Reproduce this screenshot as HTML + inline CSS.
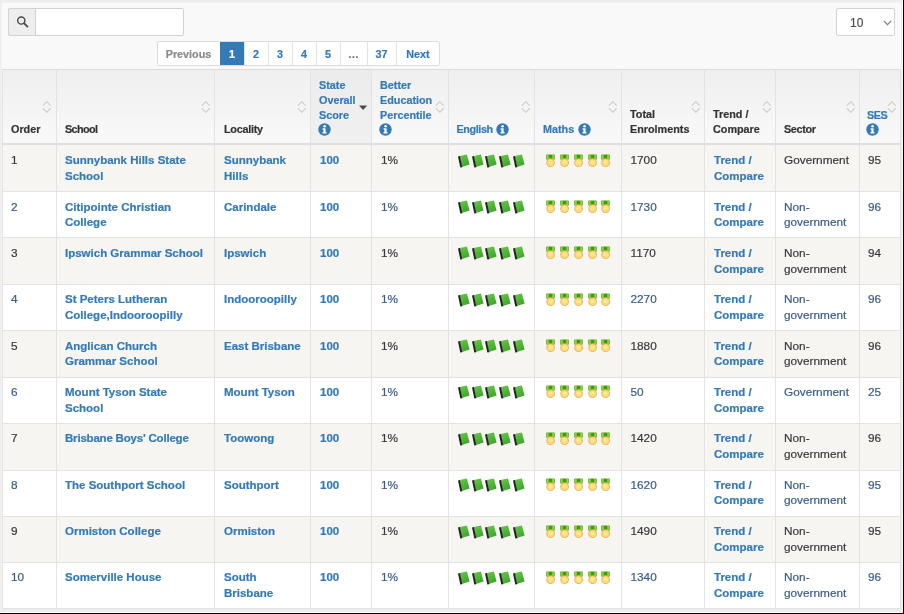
<!DOCTYPE html>
<html><head><meta charset="utf-8"><style>
*{margin:0;padding:0;box-sizing:border-box}
html,body{width:904px;height:614px;overflow:hidden}
body{background:#000;font-family:"Liberation Sans", sans-serif;position:relative}
#page{position:absolute;left:0;top:0;width:903px;height:613px;background:#ededed;overflow:hidden;will-change:transform}
#inner{position:absolute;left:1px;top:2px;width:900px;height:607px;background:#f9f9f9;border-top:1px solid #f3f3f3;border-left:1px solid #f3f3f3}
#bline{position:absolute;left:0;top:612px;width:903px;height:1px;background:#fbfbfb}
#rline{position:absolute;left:902px;top:0;width:1px;height:613px;background:#f6f6f6}
.abs{position:absolute}
.t{position:absolute;white-space:nowrap;-webkit-text-stroke:0.2px currentColor}
.si,.ii,.bk,.md{position:absolute;display:block}
.hline{position:absolute;height:1px;background:#e3e3e3}
.vline{position:absolute;width:1px;background:#e3e3e3}
</style></head>
<body><svg width="0" height="0" style="position:absolute"><defs><linearGradient id="gb" x1="0" y1="0" x2="0.6" y2="1"><stop offset="0" stop-color="#6acb48"/><stop offset="1" stop-color="#3fa42e"/></linearGradient></defs></svg><div id="page"><div id="inner"></div><div id="bline"></div><div id="rline"></div>
<div class="abs" style="left:8px;top:8px;width:176px;height:28px;border:1px solid #d2d2d2;border-radius:2px;background:#fff"></div>
<div class="abs" style="left:8px;top:8px;width:28px;height:28px;border:1px solid #d2d2d2;border-radius:2px 0 0 2px;background:#eee"></div>
<svg class="abs" style="left:16px;top:15px" width="14" height="14" viewBox="0 0 14 14"><circle cx="5.3" cy="5.5" r="3.6" fill="none" stroke="#4a4a4a" stroke-width="1.45"/><path d="M8.0 8.2 L11.4 11.6" stroke="#4a4a4a" stroke-width="1.9" stroke-linecap="round"/></svg>
<div class="abs" style="left:836px;top:8px;width:59px;height:28px;border:1px solid #d2d2d2;border-radius:2px;background:#fff"></div>
<div class="t" style="left:850px;top:15px;font-size:12px;line-height:16px;color:#505050">10</div>
<svg class="abs" style="left:883px;top:19.5px" width="9" height="6" viewBox="0 0 9 6"><path d="M0.8 0.8 L4.5 4.6 L8.2 0.8" fill="none" stroke="#777" stroke-width="1.1"/></svg>
<div class="abs" style="left:157px;top:41px;width:283px;height:25px;background:#fff"></div>
<div class="abs" style="left:157px;top:41px;width:64px;height:25px;background:#fff;"></div>
<div class="t" style="left:157px;width:63px;top:47px;text-align:center;font-size:10.8px;line-height:15px;font-weight:bold;color:#8a8a8a">Previous</div>
<div class="abs" style="left:220px;top:41px;width:24px;height:25px;background:#337ab7;"></div>
<div class="t" style="left:220px;width:24px;top:47px;text-align:center;font-size:10.8px;line-height:15px;font-weight:bold;color:#fff">1</div>
<div class="abs" style="left:244px;top:41px;width:24px;height:25px;background:#fff;border-left:1px solid #e2e2e2;"></div>
<div class="t" style="left:244px;width:24px;top:47px;text-align:center;font-size:10.8px;line-height:15px;font-weight:bold;color:#337ab7">2</div>
<div class="abs" style="left:268px;top:41px;width:24px;height:25px;background:#fff;border-left:1px solid #e2e2e2;"></div>
<div class="t" style="left:268px;width:24px;top:47px;text-align:center;font-size:10.8px;line-height:15px;font-weight:bold;color:#337ab7">3</div>
<div class="abs" style="left:292px;top:41px;width:24px;height:25px;background:#fff;border-left:1px solid #e2e2e2;"></div>
<div class="t" style="left:292px;width:24px;top:47px;text-align:center;font-size:10.8px;line-height:15px;font-weight:bold;color:#337ab7">4</div>
<div class="abs" style="left:316px;top:41px;width:24px;height:25px;background:#fff;border-left:1px solid #e2e2e2;"></div>
<div class="t" style="left:316px;width:24px;top:47px;text-align:center;font-size:10.8px;line-height:15px;font-weight:bold;color:#337ab7">5</div>
<div class="abs" style="left:340px;top:41px;width:27px;height:25px;background:#fff;border-left:1px solid #e2e2e2;"></div>
<div class="t" style="left:340px;width:27px;top:47px;text-align:center;font-size:10.8px;line-height:15px;font-weight:bold;color:#777">…</div>
<div class="abs" style="left:367px;top:41px;width:29px;height:25px;background:#fff;border-left:1px solid #e2e2e2;"></div>
<div class="t" style="left:367px;width:29px;top:47px;text-align:center;font-size:10.8px;line-height:15px;font-weight:bold;color:#337ab7">37</div>
<div class="abs" style="left:396px;top:41px;width:44px;height:25px;background:#fff;border-left:1px solid #e2e2e2;"></div>
<div class="t" style="left:396px;width:44px;top:47px;text-align:center;font-size:10.8px;line-height:15px;font-weight:bold;color:#337ab7">Next</div>
<div class="abs" style="left:157px;top:41px;width:283px;height:25px;border:1px solid #dcdcdc;border-radius:2px"></div>
<div class="abs" style="left:2px;top:70px;width:899px;height:74px;background:linear-gradient(#efefef,#f9f9f9)"></div>
<div class="abs" style="left:311px;top:70px;width:60px;height:74px;background:linear-gradient(#ececec,#f0f0f0)"></div>
<div class="abs" style="left:3px;top:145px;width:897px;height:46px;background:#f6f5f1"></div>
<div class="abs" style="left:3px;top:192px;width:897px;height:45px;background:#fff"></div>
<div class="abs" style="left:3px;top:238px;width:897px;height:46px;background:#f6f5f1"></div>
<div class="abs" style="left:3px;top:285px;width:897px;height:45px;background:#fff"></div>
<div class="abs" style="left:3px;top:331px;width:897px;height:46px;background:#f6f5f1"></div>
<div class="abs" style="left:3px;top:378px;width:897px;height:45px;background:#fff"></div>
<div class="abs" style="left:3px;top:424px;width:897px;height:46px;background:#f6f5f1"></div>
<div class="abs" style="left:3px;top:471px;width:897px;height:45px;background:#fff"></div>
<div class="abs" style="left:3px;top:517px;width:897px;height:45px;background:#f6f5f1"></div>
<div class="abs" style="left:3px;top:563px;width:897px;height:45px;background:#fff"></div>
<div class="hline" style="left:2px;top:69px;width:899px;background:#dcdcdc"></div>
<div class="abs" style="left:2px;top:143px;width:899px;height:2px;background:#dedede"></div>
<div class="hline" style="left:2px;top:191px;width:899px"></div>
<div class="hline" style="left:2px;top:237px;width:899px"></div>
<div class="hline" style="left:2px;top:284px;width:899px"></div>
<div class="hline" style="left:2px;top:330px;width:899px"></div>
<div class="hline" style="left:2px;top:377px;width:899px"></div>
<div class="hline" style="left:2px;top:423px;width:899px"></div>
<div class="hline" style="left:2px;top:470px;width:899px"></div>
<div class="hline" style="left:2px;top:516px;width:899px"></div>
<div class="hline" style="left:2px;top:562px;width:899px"></div>
<div class="hline" style="left:2px;top:608px;width:899px"></div>
<div class="vline" style="left:2px;top:69px;height:540px"></div>
<div class="vline" style="left:56px;top:69px;height:540px"></div>
<div class="vline" style="left:214px;top:69px;height:540px"></div>
<div class="vline" style="left:310px;top:69px;height:540px"></div>
<div class="vline" style="left:371px;top:69px;height:540px"></div>
<div class="vline" style="left:448px;top:69px;height:540px"></div>
<div class="vline" style="left:534px;top:69px;height:540px"></div>
<div class="vline" style="left:621px;top:69px;height:540px"></div>
<div class="vline" style="left:704px;top:69px;height:540px"></div>
<div class="vline" style="left:775px;top:69px;height:540px"></div>
<div class="vline" style="left:859px;top:69px;height:540px"></div>
<div class="vline" style="left:900px;top:69px;height:540px"></div>
<div class="t" style="left:11px;top:121.76px;font-size:10.8px;line-height:14.8px;font-weight:bold;color:#333;letter-spacing:0px">Order</div>
<div class="t" style="left:65px;top:121.76px;font-size:10.8px;line-height:14.8px;font-weight:bold;color:#333;letter-spacing:-0.6px">School</div>
<div class="t" style="left:224px;top:121.76px;font-size:10.8px;line-height:14.8px;font-weight:bold;color:#333;letter-spacing:-0.25px">Locality</div>
<div class="t" style="left:319px;top:78.26px;font-size:10.8px;line-height:14.8px;font-weight:bold;color:#337ab7;letter-spacing:0px">State<br>Overall<br>Score</div>
<svg class="ii" style="left:318px;top:123px" width="13" height="13" viewBox="0 0 13 13"><circle cx="6.5" cy="6.5" r="6.2" fill="#337ab7"/><circle cx="6.6" cy="3.2" r="1.3" fill="#fff"/><path d="M4.6 5.3 H7.6 V9.2 H8.6 V10.6 H4.4 V9.2 H5.4 V6.6 H4.6 Z" fill="#fff"/></svg>
<div class="t" style="left:380px;top:78.26px;font-size:10.8px;line-height:14.8px;font-weight:bold;color:#337ab7;letter-spacing:0px">Better<br>Education<br>Percentile</div>
<svg class="ii" style="left:379px;top:123px" width="13" height="13" viewBox="0 0 13 13"><circle cx="6.5" cy="6.5" r="6.2" fill="#337ab7"/><circle cx="6.6" cy="3.2" r="1.3" fill="#fff"/><path d="M4.6 5.3 H7.6 V9.2 H8.6 V10.6 H4.4 V9.2 H5.4 V6.6 H4.6 Z" fill="#fff"/></svg>
<div class="t" style="left:456.5px;top:121.76px;font-size:10.8px;line-height:14.8px;font-weight:bold;color:#337ab7;letter-spacing:-0.38px">English</div>
<svg class="ii" style="left:495.5px;top:123px" width="13" height="13" viewBox="0 0 13 13"><circle cx="6.5" cy="6.5" r="6.2" fill="#337ab7"/><circle cx="6.6" cy="3.2" r="1.3" fill="#fff"/><path d="M4.6 5.3 H7.6 V9.2 H8.6 V10.6 H4.4 V9.2 H5.4 V6.6 H4.6 Z" fill="#fff"/></svg>
<div class="t" style="left:543px;top:121.76px;font-size:10.8px;line-height:14.8px;font-weight:bold;color:#337ab7;letter-spacing:0px">Maths</div>
<svg class="ii" style="left:577.7px;top:123px" width="13" height="13" viewBox="0 0 13 13"><circle cx="6.5" cy="6.5" r="6.2" fill="#337ab7"/><circle cx="6.6" cy="3.2" r="1.3" fill="#fff"/><path d="M4.6 5.3 H7.6 V9.2 H8.6 V10.6 H4.4 V9.2 H5.4 V6.6 H4.6 Z" fill="#fff"/></svg>
<div class="t" style="left:630px;top:106.96px;font-size:10.8px;line-height:14.8px;font-weight:bold;color:#333;letter-spacing:0px">Total<br>Enrolments</div>
<div class="t" style="left:713px;top:106.96px;font-size:10.8px;line-height:14.8px;font-weight:bold;color:#333;letter-spacing:0px">Trend /<br>Compare</div>
<div class="t" style="left:784px;top:121.76px;font-size:10.8px;line-height:14.8px;font-weight:bold;color:#333;letter-spacing:-0.35px">Sector</div>
<div class="t" style="left:867px;top:107.86px;font-size:10.8px;line-height:14.8px;font-weight:bold;color:#337ab7;letter-spacing:-0.5px">SES</div>
<svg class="ii" style="left:866px;top:123px" width="13" height="13" viewBox="0 0 13 13"><circle cx="6.5" cy="6.5" r="6.2" fill="#337ab7"/><circle cx="6.6" cy="3.2" r="1.3" fill="#fff"/><path d="M4.6 5.3 H7.6 V9.2 H8.6 V10.6 H4.4 V9.2 H5.4 V6.6 H4.6 Z" fill="#fff"/></svg>
<svg class="si" style="left:42.300000000000004px;top:100.3px" width="10" height="14" viewBox="0 0 10 14"><path d="M0.9 5.7 L4.8 1.6 L8.7 5.7 M0.9 8.2 L4.8 12.3 L8.7 8.2" fill="none" stroke="#d2d2d2" stroke-width="1.25"/></svg>
<svg class="si" style="left:201.1px;top:100.3px" width="10" height="14" viewBox="0 0 10 14"><path d="M0.9 5.7 L4.8 1.6 L8.7 5.7 M0.9 8.2 L4.8 12.3 L8.7 8.2" fill="none" stroke="#d2d2d2" stroke-width="1.25"/></svg>
<svg class="si" style="left:296.90000000000003px;top:100.3px" width="10" height="14" viewBox="0 0 10 14"><path d="M0.9 5.7 L4.8 1.6 L8.7 5.7 M0.9 8.2 L4.8 12.3 L8.7 8.2" fill="none" stroke="#d2d2d2" stroke-width="1.25"/></svg>
<svg class="si" style="left:434.6px;top:100.3px" width="10" height="14" viewBox="0 0 10 14"><path d="M0.9 5.7 L4.8 1.6 L8.7 5.7 M0.9 8.2 L4.8 12.3 L8.7 8.2" fill="none" stroke="#d2d2d2" stroke-width="1.25"/></svg>
<svg class="si" style="left:521.1px;top:100.3px" width="10" height="14" viewBox="0 0 10 14"><path d="M0.9 5.7 L4.8 1.6 L8.7 5.7 M0.9 8.2 L4.8 12.3 L8.7 8.2" fill="none" stroke="#d2d2d2" stroke-width="1.25"/></svg>
<svg class="si" style="left:607.9px;top:100.3px" width="10" height="14" viewBox="0 0 10 14"><path d="M0.9 5.7 L4.8 1.6 L8.7 5.7 M0.9 8.2 L4.8 12.3 L8.7 8.2" fill="none" stroke="#d2d2d2" stroke-width="1.25"/></svg>
<svg class="si" style="left:691.1px;top:100.3px" width="10" height="14" viewBox="0 0 10 14"><path d="M0.9 5.7 L4.8 1.6 L8.7 5.7 M0.9 8.2 L4.8 12.3 L8.7 8.2" fill="none" stroke="#d2d2d2" stroke-width="1.25"/></svg>
<svg class="si" style="left:762.2px;top:100.3px" width="10" height="14" viewBox="0 0 10 14"><path d="M0.9 5.7 L4.8 1.6 L8.7 5.7 M0.9 8.2 L4.8 12.3 L8.7 8.2" fill="none" stroke="#d2d2d2" stroke-width="1.25"/></svg>
<svg class="si" style="left:845.6px;top:100.3px" width="10" height="14" viewBox="0 0 10 14"><path d="M0.9 5.7 L4.8 1.6 L8.7 5.7 M0.9 8.2 L4.8 12.3 L8.7 8.2" fill="none" stroke="#d2d2d2" stroke-width="1.25"/></svg>
<svg class="si" style="left:886.9px;top:100.3px" width="10" height="14" viewBox="0 0 10 14"><path d="M0.9 5.7 L4.8 1.6 L8.7 5.7 M0.9 8.2 L4.8 12.3 L8.7 8.2" fill="none" stroke="#d2d2d2" stroke-width="1.25"/></svg>
<svg class="abs" style="left:358px;top:105px" width="10" height="6" viewBox="0 0 10 6"><path d="M1 0.6 H9.2 L5.1 5 Z" fill="#4a4a4a"/></svg>
<div class="t" style="left:11px;top:152.21px;font-size:11.8px;line-height:16px;color:#3a3a3a">1</div>
<div class="t" style="left:65px;top:152.32px;font-size:11.5px;line-height:16px;font-weight:bold;color:#337ab7">Sunnybank Hills State</div><div class="t" style="left:65px;top:167.92px;font-size:11.5px;line-height:16px;font-weight:bold;color:#337ab7">School</div>
<div class="t" style="left:224px;top:152.32px;font-size:11.5px;line-height:16px;font-weight:bold;color:#337ab7">Sunnybank</div><div class="t" style="left:224px;top:167.92px;font-size:11.5px;line-height:16px;font-weight:bold;color:#337ab7">Hills</div>
<div class="t" style="left:320px;top:152.32px;font-size:11.5px;line-height:16px;font-weight:bold;color:#337ab7">100</div>
<div class="t" style="left:381px;top:152.21px;font-size:11.8px;line-height:16px;color:#3a3a3a">1%</div>
<svg class="bk" style="left:458.0px;top:153.70000000000002px" width="13" height="15" viewBox="0 0 13 15"><path d="M1.6 1.9 L8.9 0.5 L11.6 10.6 L3.9 13.0 Z" fill="url(#gb)"/><path d="M0.0 2.5 L1.9 2.1 L4.3 13.3 L2.3 13.6 Z" fill="#222"/></svg>
<svg class="bk" style="left:471.7px;top:153.70000000000002px" width="13" height="15" viewBox="0 0 13 15"><path d="M1.6 1.9 L8.9 0.5 L11.6 10.6 L3.9 13.0 Z" fill="url(#gb)"/><path d="M0.0 2.5 L1.9 2.1 L4.3 13.3 L2.3 13.6 Z" fill="#222"/></svg>
<svg class="bk" style="left:485.4px;top:153.70000000000002px" width="13" height="15" viewBox="0 0 13 15"><path d="M1.6 1.9 L8.9 0.5 L11.6 10.6 L3.9 13.0 Z" fill="url(#gb)"/><path d="M0.0 2.5 L1.9 2.1 L4.3 13.3 L2.3 13.6 Z" fill="#222"/></svg>
<svg class="bk" style="left:499.1px;top:153.70000000000002px" width="13" height="15" viewBox="0 0 13 15"><path d="M1.6 1.9 L8.9 0.5 L11.6 10.6 L3.9 13.0 Z" fill="url(#gb)"/><path d="M0.0 2.5 L1.9 2.1 L4.3 13.3 L2.3 13.6 Z" fill="#222"/></svg>
<svg class="bk" style="left:512.8px;top:153.70000000000002px" width="13" height="15" viewBox="0 0 13 15"><path d="M1.6 1.9 L8.9 0.5 L11.6 10.6 L3.9 13.0 Z" fill="url(#gb)"/><path d="M0.0 2.5 L1.9 2.1 L4.3 13.3 L2.3 13.6 Z" fill="#222"/></svg>
<svg class="md" style="left:546.2px;top:153.70000000000002px" width="10" height="15" viewBox="0 0 10 15"><rect x="0.2" y="0.5" width="8.6" height="5.2" rx="0.7" fill="#5aaf1e"/><rect x="1.0" y="0.9" width="1.6" height="4.4" fill="#8fd43c"/><rect x="6.4" y="0.9" width="1.6" height="4.4" fill="#8fd43c"/><rect x="3.2" y="0.9" width="2.6" height="4.4" fill="#3f9612"/><circle cx="4.6" cy="8.7" r="4.35" fill="#ebb05e"/><circle cx="4.6" cy="8.7" r="3.45" fill="#f9dc72"/><circle cx="4.6" cy="8.3" r="2.1" fill="#fce796"/></svg>
<svg class="md" style="left:559.98px;top:153.70000000000002px" width="10" height="15" viewBox="0 0 10 15"><rect x="0.2" y="0.5" width="8.6" height="5.2" rx="0.7" fill="#5aaf1e"/><rect x="1.0" y="0.9" width="1.6" height="4.4" fill="#8fd43c"/><rect x="6.4" y="0.9" width="1.6" height="4.4" fill="#8fd43c"/><rect x="3.2" y="0.9" width="2.6" height="4.4" fill="#3f9612"/><circle cx="4.6" cy="8.7" r="4.35" fill="#ebb05e"/><circle cx="4.6" cy="8.7" r="3.45" fill="#f9dc72"/><circle cx="4.6" cy="8.3" r="2.1" fill="#fce796"/></svg>
<svg class="md" style="left:573.76px;top:153.70000000000002px" width="10" height="15" viewBox="0 0 10 15"><rect x="0.2" y="0.5" width="8.6" height="5.2" rx="0.7" fill="#5aaf1e"/><rect x="1.0" y="0.9" width="1.6" height="4.4" fill="#8fd43c"/><rect x="6.4" y="0.9" width="1.6" height="4.4" fill="#8fd43c"/><rect x="3.2" y="0.9" width="2.6" height="4.4" fill="#3f9612"/><circle cx="4.6" cy="8.7" r="4.35" fill="#ebb05e"/><circle cx="4.6" cy="8.7" r="3.45" fill="#f9dc72"/><circle cx="4.6" cy="8.3" r="2.1" fill="#fce796"/></svg>
<svg class="md" style="left:587.5400000000001px;top:153.70000000000002px" width="10" height="15" viewBox="0 0 10 15"><rect x="0.2" y="0.5" width="8.6" height="5.2" rx="0.7" fill="#5aaf1e"/><rect x="1.0" y="0.9" width="1.6" height="4.4" fill="#8fd43c"/><rect x="6.4" y="0.9" width="1.6" height="4.4" fill="#8fd43c"/><rect x="3.2" y="0.9" width="2.6" height="4.4" fill="#3f9612"/><circle cx="4.6" cy="8.7" r="4.35" fill="#ebb05e"/><circle cx="4.6" cy="8.7" r="3.45" fill="#f9dc72"/><circle cx="4.6" cy="8.3" r="2.1" fill="#fce796"/></svg>
<svg class="md" style="left:601.32px;top:153.70000000000002px" width="10" height="15" viewBox="0 0 10 15"><rect x="0.2" y="0.5" width="8.6" height="5.2" rx="0.7" fill="#5aaf1e"/><rect x="1.0" y="0.9" width="1.6" height="4.4" fill="#8fd43c"/><rect x="6.4" y="0.9" width="1.6" height="4.4" fill="#8fd43c"/><rect x="3.2" y="0.9" width="2.6" height="4.4" fill="#3f9612"/><circle cx="4.6" cy="8.7" r="4.35" fill="#ebb05e"/><circle cx="4.6" cy="8.7" r="3.45" fill="#f9dc72"/><circle cx="4.6" cy="8.3" r="2.1" fill="#fce796"/></svg>
<div class="t" style="left:630.5px;top:152.21px;font-size:11.8px;line-height:16px;color:#3a3a3a">1700</div>
<div class="t" style="left:714px;top:152.32px;font-size:11.5px;line-height:16px;font-weight:bold;color:#337ab7">Trend /</div><div class="t" style="left:714px;top:167.92px;font-size:11.5px;line-height:16px;font-weight:bold;color:#337ab7">Compare</div>
<div class="t" style="left:784px;top:152.21px;font-size:11.8px;line-height:16px;color:#3a3a3a">Government</div>
<div class="t" style="left:868px;top:152.21px;font-size:11.8px;line-height:16px;color:#3a3a3a">95</div>
<div class="t" style="left:11px;top:198.56px;font-size:11.8px;line-height:16px;color:#3a5b8a">2</div>
<div class="t" style="left:65px;top:198.67px;font-size:11.5px;line-height:16px;font-weight:bold;color:#337ab7">Citipointe Christian</div><div class="t" style="left:65px;top:214.27px;font-size:11.5px;line-height:16px;font-weight:bold;color:#337ab7">College</div>
<div class="t" style="left:224px;top:198.67px;font-size:11.5px;line-height:16px;font-weight:bold;color:#337ab7">Carindale</div>
<div class="t" style="left:320px;top:198.67px;font-size:11.5px;line-height:16px;font-weight:bold;color:#337ab7">100</div>
<div class="t" style="left:381px;top:198.56px;font-size:11.8px;line-height:16px;color:#3a5b8a">1%</div>
<svg class="bk" style="left:458.0px;top:200.05px" width="13" height="15" viewBox="0 0 13 15"><path d="M1.6 1.9 L8.9 0.5 L11.6 10.6 L3.9 13.0 Z" fill="url(#gb)"/><path d="M0.0 2.5 L1.9 2.1 L4.3 13.3 L2.3 13.6 Z" fill="#222"/></svg>
<svg class="bk" style="left:471.7px;top:200.05px" width="13" height="15" viewBox="0 0 13 15"><path d="M1.6 1.9 L8.9 0.5 L11.6 10.6 L3.9 13.0 Z" fill="url(#gb)"/><path d="M0.0 2.5 L1.9 2.1 L4.3 13.3 L2.3 13.6 Z" fill="#222"/></svg>
<svg class="bk" style="left:485.4px;top:200.05px" width="13" height="15" viewBox="0 0 13 15"><path d="M1.6 1.9 L8.9 0.5 L11.6 10.6 L3.9 13.0 Z" fill="url(#gb)"/><path d="M0.0 2.5 L1.9 2.1 L4.3 13.3 L2.3 13.6 Z" fill="#222"/></svg>
<svg class="bk" style="left:499.1px;top:200.05px" width="13" height="15" viewBox="0 0 13 15"><path d="M1.6 1.9 L8.9 0.5 L11.6 10.6 L3.9 13.0 Z" fill="url(#gb)"/><path d="M0.0 2.5 L1.9 2.1 L4.3 13.3 L2.3 13.6 Z" fill="#222"/></svg>
<svg class="bk" style="left:512.8px;top:200.05px" width="13" height="15" viewBox="0 0 13 15"><path d="M1.6 1.9 L8.9 0.5 L11.6 10.6 L3.9 13.0 Z" fill="url(#gb)"/><path d="M0.0 2.5 L1.9 2.1 L4.3 13.3 L2.3 13.6 Z" fill="#222"/></svg>
<svg class="md" style="left:546.2px;top:200.05px" width="10" height="15" viewBox="0 0 10 15"><rect x="0.2" y="0.5" width="8.6" height="5.2" rx="0.7" fill="#5aaf1e"/><rect x="1.0" y="0.9" width="1.6" height="4.4" fill="#8fd43c"/><rect x="6.4" y="0.9" width="1.6" height="4.4" fill="#8fd43c"/><rect x="3.2" y="0.9" width="2.6" height="4.4" fill="#3f9612"/><circle cx="4.6" cy="8.7" r="4.35" fill="#ebb05e"/><circle cx="4.6" cy="8.7" r="3.45" fill="#f9dc72"/><circle cx="4.6" cy="8.3" r="2.1" fill="#fce796"/></svg>
<svg class="md" style="left:559.98px;top:200.05px" width="10" height="15" viewBox="0 0 10 15"><rect x="0.2" y="0.5" width="8.6" height="5.2" rx="0.7" fill="#5aaf1e"/><rect x="1.0" y="0.9" width="1.6" height="4.4" fill="#8fd43c"/><rect x="6.4" y="0.9" width="1.6" height="4.4" fill="#8fd43c"/><rect x="3.2" y="0.9" width="2.6" height="4.4" fill="#3f9612"/><circle cx="4.6" cy="8.7" r="4.35" fill="#ebb05e"/><circle cx="4.6" cy="8.7" r="3.45" fill="#f9dc72"/><circle cx="4.6" cy="8.3" r="2.1" fill="#fce796"/></svg>
<svg class="md" style="left:573.76px;top:200.05px" width="10" height="15" viewBox="0 0 10 15"><rect x="0.2" y="0.5" width="8.6" height="5.2" rx="0.7" fill="#5aaf1e"/><rect x="1.0" y="0.9" width="1.6" height="4.4" fill="#8fd43c"/><rect x="6.4" y="0.9" width="1.6" height="4.4" fill="#8fd43c"/><rect x="3.2" y="0.9" width="2.6" height="4.4" fill="#3f9612"/><circle cx="4.6" cy="8.7" r="4.35" fill="#ebb05e"/><circle cx="4.6" cy="8.7" r="3.45" fill="#f9dc72"/><circle cx="4.6" cy="8.3" r="2.1" fill="#fce796"/></svg>
<svg class="md" style="left:587.5400000000001px;top:200.05px" width="10" height="15" viewBox="0 0 10 15"><rect x="0.2" y="0.5" width="8.6" height="5.2" rx="0.7" fill="#5aaf1e"/><rect x="1.0" y="0.9" width="1.6" height="4.4" fill="#8fd43c"/><rect x="6.4" y="0.9" width="1.6" height="4.4" fill="#8fd43c"/><rect x="3.2" y="0.9" width="2.6" height="4.4" fill="#3f9612"/><circle cx="4.6" cy="8.7" r="4.35" fill="#ebb05e"/><circle cx="4.6" cy="8.7" r="3.45" fill="#f9dc72"/><circle cx="4.6" cy="8.3" r="2.1" fill="#fce796"/></svg>
<svg class="md" style="left:601.32px;top:200.05px" width="10" height="15" viewBox="0 0 10 15"><rect x="0.2" y="0.5" width="8.6" height="5.2" rx="0.7" fill="#5aaf1e"/><rect x="1.0" y="0.9" width="1.6" height="4.4" fill="#8fd43c"/><rect x="6.4" y="0.9" width="1.6" height="4.4" fill="#8fd43c"/><rect x="3.2" y="0.9" width="2.6" height="4.4" fill="#3f9612"/><circle cx="4.6" cy="8.7" r="4.35" fill="#ebb05e"/><circle cx="4.6" cy="8.7" r="3.45" fill="#f9dc72"/><circle cx="4.6" cy="8.3" r="2.1" fill="#fce796"/></svg>
<div class="t" style="left:630.5px;top:198.56px;font-size:11.8px;line-height:16px;color:#3a5b8a">1730</div>
<div class="t" style="left:714px;top:198.67px;font-size:11.5px;line-height:16px;font-weight:bold;color:#337ab7">Trend /</div><div class="t" style="left:714px;top:214.27px;font-size:11.5px;line-height:16px;font-weight:bold;color:#337ab7">Compare</div>
<div class="t" style="left:784px;top:198.56px;font-size:11.8px;line-height:16px;color:#3a5b8a">Non-</div><div class="t" style="left:784px;top:214.16px;font-size:11.8px;line-height:16px;color:#3a5b8a">government</div>
<div class="t" style="left:868px;top:198.56px;font-size:11.8px;line-height:16px;color:#3a5b8a">96</div>
<div class="t" style="left:11px;top:244.91px;font-size:11.8px;line-height:16px;color:#3a3a3a">3</div>
<div class="t" style="left:65px;top:245.02px;font-size:11.5px;line-height:16px;font-weight:bold;color:#337ab7">Ipswich Grammar School</div>
<div class="t" style="left:224px;top:245.02px;font-size:11.5px;line-height:16px;font-weight:bold;color:#337ab7">Ipswich</div>
<div class="t" style="left:320px;top:245.02px;font-size:11.5px;line-height:16px;font-weight:bold;color:#337ab7">100</div>
<div class="t" style="left:381px;top:244.91px;font-size:11.8px;line-height:16px;color:#3a3a3a">1%</div>
<svg class="bk" style="left:458.0px;top:246.4px" width="13" height="15" viewBox="0 0 13 15"><path d="M1.6 1.9 L8.9 0.5 L11.6 10.6 L3.9 13.0 Z" fill="url(#gb)"/><path d="M0.0 2.5 L1.9 2.1 L4.3 13.3 L2.3 13.6 Z" fill="#222"/></svg>
<svg class="bk" style="left:471.7px;top:246.4px" width="13" height="15" viewBox="0 0 13 15"><path d="M1.6 1.9 L8.9 0.5 L11.6 10.6 L3.9 13.0 Z" fill="url(#gb)"/><path d="M0.0 2.5 L1.9 2.1 L4.3 13.3 L2.3 13.6 Z" fill="#222"/></svg>
<svg class="bk" style="left:485.4px;top:246.4px" width="13" height="15" viewBox="0 0 13 15"><path d="M1.6 1.9 L8.9 0.5 L11.6 10.6 L3.9 13.0 Z" fill="url(#gb)"/><path d="M0.0 2.5 L1.9 2.1 L4.3 13.3 L2.3 13.6 Z" fill="#222"/></svg>
<svg class="bk" style="left:499.1px;top:246.4px" width="13" height="15" viewBox="0 0 13 15"><path d="M1.6 1.9 L8.9 0.5 L11.6 10.6 L3.9 13.0 Z" fill="url(#gb)"/><path d="M0.0 2.5 L1.9 2.1 L4.3 13.3 L2.3 13.6 Z" fill="#222"/></svg>
<svg class="bk" style="left:512.8px;top:246.4px" width="13" height="15" viewBox="0 0 13 15"><path d="M1.6 1.9 L8.9 0.5 L11.6 10.6 L3.9 13.0 Z" fill="url(#gb)"/><path d="M0.0 2.5 L1.9 2.1 L4.3 13.3 L2.3 13.6 Z" fill="#222"/></svg>
<svg class="md" style="left:546.2px;top:246.4px" width="10" height="15" viewBox="0 0 10 15"><rect x="0.2" y="0.5" width="8.6" height="5.2" rx="0.7" fill="#5aaf1e"/><rect x="1.0" y="0.9" width="1.6" height="4.4" fill="#8fd43c"/><rect x="6.4" y="0.9" width="1.6" height="4.4" fill="#8fd43c"/><rect x="3.2" y="0.9" width="2.6" height="4.4" fill="#3f9612"/><circle cx="4.6" cy="8.7" r="4.35" fill="#ebb05e"/><circle cx="4.6" cy="8.7" r="3.45" fill="#f9dc72"/><circle cx="4.6" cy="8.3" r="2.1" fill="#fce796"/></svg>
<svg class="md" style="left:559.98px;top:246.4px" width="10" height="15" viewBox="0 0 10 15"><rect x="0.2" y="0.5" width="8.6" height="5.2" rx="0.7" fill="#5aaf1e"/><rect x="1.0" y="0.9" width="1.6" height="4.4" fill="#8fd43c"/><rect x="6.4" y="0.9" width="1.6" height="4.4" fill="#8fd43c"/><rect x="3.2" y="0.9" width="2.6" height="4.4" fill="#3f9612"/><circle cx="4.6" cy="8.7" r="4.35" fill="#ebb05e"/><circle cx="4.6" cy="8.7" r="3.45" fill="#f9dc72"/><circle cx="4.6" cy="8.3" r="2.1" fill="#fce796"/></svg>
<svg class="md" style="left:573.76px;top:246.4px" width="10" height="15" viewBox="0 0 10 15"><rect x="0.2" y="0.5" width="8.6" height="5.2" rx="0.7" fill="#5aaf1e"/><rect x="1.0" y="0.9" width="1.6" height="4.4" fill="#8fd43c"/><rect x="6.4" y="0.9" width="1.6" height="4.4" fill="#8fd43c"/><rect x="3.2" y="0.9" width="2.6" height="4.4" fill="#3f9612"/><circle cx="4.6" cy="8.7" r="4.35" fill="#ebb05e"/><circle cx="4.6" cy="8.7" r="3.45" fill="#f9dc72"/><circle cx="4.6" cy="8.3" r="2.1" fill="#fce796"/></svg>
<svg class="md" style="left:587.5400000000001px;top:246.4px" width="10" height="15" viewBox="0 0 10 15"><rect x="0.2" y="0.5" width="8.6" height="5.2" rx="0.7" fill="#5aaf1e"/><rect x="1.0" y="0.9" width="1.6" height="4.4" fill="#8fd43c"/><rect x="6.4" y="0.9" width="1.6" height="4.4" fill="#8fd43c"/><rect x="3.2" y="0.9" width="2.6" height="4.4" fill="#3f9612"/><circle cx="4.6" cy="8.7" r="4.35" fill="#ebb05e"/><circle cx="4.6" cy="8.7" r="3.45" fill="#f9dc72"/><circle cx="4.6" cy="8.3" r="2.1" fill="#fce796"/></svg>
<svg class="md" style="left:601.32px;top:246.4px" width="10" height="15" viewBox="0 0 10 15"><rect x="0.2" y="0.5" width="8.6" height="5.2" rx="0.7" fill="#5aaf1e"/><rect x="1.0" y="0.9" width="1.6" height="4.4" fill="#8fd43c"/><rect x="6.4" y="0.9" width="1.6" height="4.4" fill="#8fd43c"/><rect x="3.2" y="0.9" width="2.6" height="4.4" fill="#3f9612"/><circle cx="4.6" cy="8.7" r="4.35" fill="#ebb05e"/><circle cx="4.6" cy="8.7" r="3.45" fill="#f9dc72"/><circle cx="4.6" cy="8.3" r="2.1" fill="#fce796"/></svg>
<div class="t" style="left:630.5px;top:244.91px;font-size:11.8px;line-height:16px;color:#3a3a3a">1170</div>
<div class="t" style="left:714px;top:245.02px;font-size:11.5px;line-height:16px;font-weight:bold;color:#337ab7">Trend /</div><div class="t" style="left:714px;top:260.62px;font-size:11.5px;line-height:16px;font-weight:bold;color:#337ab7">Compare</div>
<div class="t" style="left:784px;top:244.91px;font-size:11.8px;line-height:16px;color:#3a3a3a">Non-</div><div class="t" style="left:784px;top:260.51px;font-size:11.8px;line-height:16px;color:#3a3a3a">government</div>
<div class="t" style="left:868px;top:244.91px;font-size:11.8px;line-height:16px;color:#3a3a3a">94</div>
<div class="t" style="left:11px;top:291.26px;font-size:11.8px;line-height:16px;color:#3a5b8a">4</div>
<div class="t" style="left:65px;top:291.37px;font-size:11.5px;line-height:16px;font-weight:bold;color:#337ab7">St Peters Lutheran</div><div class="t" style="left:65px;top:306.97px;font-size:11.5px;line-height:16px;font-weight:bold;color:#337ab7">College,Indooroopilly</div>
<div class="t" style="left:224px;top:291.37px;font-size:11.5px;line-height:16px;font-weight:bold;color:#337ab7">Indooroopilly</div>
<div class="t" style="left:320px;top:291.37px;font-size:11.5px;line-height:16px;font-weight:bold;color:#337ab7">100</div>
<div class="t" style="left:381px;top:291.26px;font-size:11.8px;line-height:16px;color:#3a5b8a">1%</div>
<svg class="bk" style="left:458.0px;top:292.75px" width="13" height="15" viewBox="0 0 13 15"><path d="M1.6 1.9 L8.9 0.5 L11.6 10.6 L3.9 13.0 Z" fill="url(#gb)"/><path d="M0.0 2.5 L1.9 2.1 L4.3 13.3 L2.3 13.6 Z" fill="#222"/></svg>
<svg class="bk" style="left:471.7px;top:292.75px" width="13" height="15" viewBox="0 0 13 15"><path d="M1.6 1.9 L8.9 0.5 L11.6 10.6 L3.9 13.0 Z" fill="url(#gb)"/><path d="M0.0 2.5 L1.9 2.1 L4.3 13.3 L2.3 13.6 Z" fill="#222"/></svg>
<svg class="bk" style="left:485.4px;top:292.75px" width="13" height="15" viewBox="0 0 13 15"><path d="M1.6 1.9 L8.9 0.5 L11.6 10.6 L3.9 13.0 Z" fill="url(#gb)"/><path d="M0.0 2.5 L1.9 2.1 L4.3 13.3 L2.3 13.6 Z" fill="#222"/></svg>
<svg class="bk" style="left:499.1px;top:292.75px" width="13" height="15" viewBox="0 0 13 15"><path d="M1.6 1.9 L8.9 0.5 L11.6 10.6 L3.9 13.0 Z" fill="url(#gb)"/><path d="M0.0 2.5 L1.9 2.1 L4.3 13.3 L2.3 13.6 Z" fill="#222"/></svg>
<svg class="bk" style="left:512.8px;top:292.75px" width="13" height="15" viewBox="0 0 13 15"><path d="M1.6 1.9 L8.9 0.5 L11.6 10.6 L3.9 13.0 Z" fill="url(#gb)"/><path d="M0.0 2.5 L1.9 2.1 L4.3 13.3 L2.3 13.6 Z" fill="#222"/></svg>
<svg class="md" style="left:546.2px;top:292.75px" width="10" height="15" viewBox="0 0 10 15"><rect x="0.2" y="0.5" width="8.6" height="5.2" rx="0.7" fill="#5aaf1e"/><rect x="1.0" y="0.9" width="1.6" height="4.4" fill="#8fd43c"/><rect x="6.4" y="0.9" width="1.6" height="4.4" fill="#8fd43c"/><rect x="3.2" y="0.9" width="2.6" height="4.4" fill="#3f9612"/><circle cx="4.6" cy="8.7" r="4.35" fill="#ebb05e"/><circle cx="4.6" cy="8.7" r="3.45" fill="#f9dc72"/><circle cx="4.6" cy="8.3" r="2.1" fill="#fce796"/></svg>
<svg class="md" style="left:559.98px;top:292.75px" width="10" height="15" viewBox="0 0 10 15"><rect x="0.2" y="0.5" width="8.6" height="5.2" rx="0.7" fill="#5aaf1e"/><rect x="1.0" y="0.9" width="1.6" height="4.4" fill="#8fd43c"/><rect x="6.4" y="0.9" width="1.6" height="4.4" fill="#8fd43c"/><rect x="3.2" y="0.9" width="2.6" height="4.4" fill="#3f9612"/><circle cx="4.6" cy="8.7" r="4.35" fill="#ebb05e"/><circle cx="4.6" cy="8.7" r="3.45" fill="#f9dc72"/><circle cx="4.6" cy="8.3" r="2.1" fill="#fce796"/></svg>
<svg class="md" style="left:573.76px;top:292.75px" width="10" height="15" viewBox="0 0 10 15"><rect x="0.2" y="0.5" width="8.6" height="5.2" rx="0.7" fill="#5aaf1e"/><rect x="1.0" y="0.9" width="1.6" height="4.4" fill="#8fd43c"/><rect x="6.4" y="0.9" width="1.6" height="4.4" fill="#8fd43c"/><rect x="3.2" y="0.9" width="2.6" height="4.4" fill="#3f9612"/><circle cx="4.6" cy="8.7" r="4.35" fill="#ebb05e"/><circle cx="4.6" cy="8.7" r="3.45" fill="#f9dc72"/><circle cx="4.6" cy="8.3" r="2.1" fill="#fce796"/></svg>
<svg class="md" style="left:587.5400000000001px;top:292.75px" width="10" height="15" viewBox="0 0 10 15"><rect x="0.2" y="0.5" width="8.6" height="5.2" rx="0.7" fill="#5aaf1e"/><rect x="1.0" y="0.9" width="1.6" height="4.4" fill="#8fd43c"/><rect x="6.4" y="0.9" width="1.6" height="4.4" fill="#8fd43c"/><rect x="3.2" y="0.9" width="2.6" height="4.4" fill="#3f9612"/><circle cx="4.6" cy="8.7" r="4.35" fill="#ebb05e"/><circle cx="4.6" cy="8.7" r="3.45" fill="#f9dc72"/><circle cx="4.6" cy="8.3" r="2.1" fill="#fce796"/></svg>
<svg class="md" style="left:601.32px;top:292.75px" width="10" height="15" viewBox="0 0 10 15"><rect x="0.2" y="0.5" width="8.6" height="5.2" rx="0.7" fill="#5aaf1e"/><rect x="1.0" y="0.9" width="1.6" height="4.4" fill="#8fd43c"/><rect x="6.4" y="0.9" width="1.6" height="4.4" fill="#8fd43c"/><rect x="3.2" y="0.9" width="2.6" height="4.4" fill="#3f9612"/><circle cx="4.6" cy="8.7" r="4.35" fill="#ebb05e"/><circle cx="4.6" cy="8.7" r="3.45" fill="#f9dc72"/><circle cx="4.6" cy="8.3" r="2.1" fill="#fce796"/></svg>
<div class="t" style="left:630.5px;top:291.26px;font-size:11.8px;line-height:16px;color:#3a5b8a">2270</div>
<div class="t" style="left:714px;top:291.37px;font-size:11.5px;line-height:16px;font-weight:bold;color:#337ab7">Trend /</div><div class="t" style="left:714px;top:306.97px;font-size:11.5px;line-height:16px;font-weight:bold;color:#337ab7">Compare</div>
<div class="t" style="left:784px;top:291.26px;font-size:11.8px;line-height:16px;color:#3a5b8a">Non-</div><div class="t" style="left:784px;top:306.86px;font-size:11.8px;line-height:16px;color:#3a5b8a">government</div>
<div class="t" style="left:868px;top:291.26px;font-size:11.8px;line-height:16px;color:#3a5b8a">96</div>
<div class="t" style="left:11px;top:337.61px;font-size:11.8px;line-height:16px;color:#3a3a3a">5</div>
<div class="t" style="left:65px;top:337.72px;font-size:11.5px;line-height:16px;font-weight:bold;color:#337ab7">Anglican Church</div><div class="t" style="left:65px;top:353.32px;font-size:11.5px;line-height:16px;font-weight:bold;color:#337ab7">Grammar School</div>
<div class="t" style="left:224px;top:337.72px;font-size:11.5px;line-height:16px;font-weight:bold;color:#337ab7">East Brisbane</div>
<div class="t" style="left:320px;top:337.72px;font-size:11.5px;line-height:16px;font-weight:bold;color:#337ab7">100</div>
<div class="t" style="left:381px;top:337.61px;font-size:11.8px;line-height:16px;color:#3a3a3a">1%</div>
<svg class="bk" style="left:458.0px;top:339.1px" width="13" height="15" viewBox="0 0 13 15"><path d="M1.6 1.9 L8.9 0.5 L11.6 10.6 L3.9 13.0 Z" fill="url(#gb)"/><path d="M0.0 2.5 L1.9 2.1 L4.3 13.3 L2.3 13.6 Z" fill="#222"/></svg>
<svg class="bk" style="left:471.7px;top:339.1px" width="13" height="15" viewBox="0 0 13 15"><path d="M1.6 1.9 L8.9 0.5 L11.6 10.6 L3.9 13.0 Z" fill="url(#gb)"/><path d="M0.0 2.5 L1.9 2.1 L4.3 13.3 L2.3 13.6 Z" fill="#222"/></svg>
<svg class="bk" style="left:485.4px;top:339.1px" width="13" height="15" viewBox="0 0 13 15"><path d="M1.6 1.9 L8.9 0.5 L11.6 10.6 L3.9 13.0 Z" fill="url(#gb)"/><path d="M0.0 2.5 L1.9 2.1 L4.3 13.3 L2.3 13.6 Z" fill="#222"/></svg>
<svg class="bk" style="left:499.1px;top:339.1px" width="13" height="15" viewBox="0 0 13 15"><path d="M1.6 1.9 L8.9 0.5 L11.6 10.6 L3.9 13.0 Z" fill="url(#gb)"/><path d="M0.0 2.5 L1.9 2.1 L4.3 13.3 L2.3 13.6 Z" fill="#222"/></svg>
<svg class="bk" style="left:512.8px;top:339.1px" width="13" height="15" viewBox="0 0 13 15"><path d="M1.6 1.9 L8.9 0.5 L11.6 10.6 L3.9 13.0 Z" fill="url(#gb)"/><path d="M0.0 2.5 L1.9 2.1 L4.3 13.3 L2.3 13.6 Z" fill="#222"/></svg>
<svg class="md" style="left:546.2px;top:339.1px" width="10" height="15" viewBox="0 0 10 15"><rect x="0.2" y="0.5" width="8.6" height="5.2" rx="0.7" fill="#5aaf1e"/><rect x="1.0" y="0.9" width="1.6" height="4.4" fill="#8fd43c"/><rect x="6.4" y="0.9" width="1.6" height="4.4" fill="#8fd43c"/><rect x="3.2" y="0.9" width="2.6" height="4.4" fill="#3f9612"/><circle cx="4.6" cy="8.7" r="4.35" fill="#ebb05e"/><circle cx="4.6" cy="8.7" r="3.45" fill="#f9dc72"/><circle cx="4.6" cy="8.3" r="2.1" fill="#fce796"/></svg>
<svg class="md" style="left:559.98px;top:339.1px" width="10" height="15" viewBox="0 0 10 15"><rect x="0.2" y="0.5" width="8.6" height="5.2" rx="0.7" fill="#5aaf1e"/><rect x="1.0" y="0.9" width="1.6" height="4.4" fill="#8fd43c"/><rect x="6.4" y="0.9" width="1.6" height="4.4" fill="#8fd43c"/><rect x="3.2" y="0.9" width="2.6" height="4.4" fill="#3f9612"/><circle cx="4.6" cy="8.7" r="4.35" fill="#ebb05e"/><circle cx="4.6" cy="8.7" r="3.45" fill="#f9dc72"/><circle cx="4.6" cy="8.3" r="2.1" fill="#fce796"/></svg>
<svg class="md" style="left:573.76px;top:339.1px" width="10" height="15" viewBox="0 0 10 15"><rect x="0.2" y="0.5" width="8.6" height="5.2" rx="0.7" fill="#5aaf1e"/><rect x="1.0" y="0.9" width="1.6" height="4.4" fill="#8fd43c"/><rect x="6.4" y="0.9" width="1.6" height="4.4" fill="#8fd43c"/><rect x="3.2" y="0.9" width="2.6" height="4.4" fill="#3f9612"/><circle cx="4.6" cy="8.7" r="4.35" fill="#ebb05e"/><circle cx="4.6" cy="8.7" r="3.45" fill="#f9dc72"/><circle cx="4.6" cy="8.3" r="2.1" fill="#fce796"/></svg>
<svg class="md" style="left:587.5400000000001px;top:339.1px" width="10" height="15" viewBox="0 0 10 15"><rect x="0.2" y="0.5" width="8.6" height="5.2" rx="0.7" fill="#5aaf1e"/><rect x="1.0" y="0.9" width="1.6" height="4.4" fill="#8fd43c"/><rect x="6.4" y="0.9" width="1.6" height="4.4" fill="#8fd43c"/><rect x="3.2" y="0.9" width="2.6" height="4.4" fill="#3f9612"/><circle cx="4.6" cy="8.7" r="4.35" fill="#ebb05e"/><circle cx="4.6" cy="8.7" r="3.45" fill="#f9dc72"/><circle cx="4.6" cy="8.3" r="2.1" fill="#fce796"/></svg>
<svg class="md" style="left:601.32px;top:339.1px" width="10" height="15" viewBox="0 0 10 15"><rect x="0.2" y="0.5" width="8.6" height="5.2" rx="0.7" fill="#5aaf1e"/><rect x="1.0" y="0.9" width="1.6" height="4.4" fill="#8fd43c"/><rect x="6.4" y="0.9" width="1.6" height="4.4" fill="#8fd43c"/><rect x="3.2" y="0.9" width="2.6" height="4.4" fill="#3f9612"/><circle cx="4.6" cy="8.7" r="4.35" fill="#ebb05e"/><circle cx="4.6" cy="8.7" r="3.45" fill="#f9dc72"/><circle cx="4.6" cy="8.3" r="2.1" fill="#fce796"/></svg>
<div class="t" style="left:630.5px;top:337.61px;font-size:11.8px;line-height:16px;color:#3a3a3a">1880</div>
<div class="t" style="left:714px;top:337.72px;font-size:11.5px;line-height:16px;font-weight:bold;color:#337ab7">Trend /</div><div class="t" style="left:714px;top:353.32px;font-size:11.5px;line-height:16px;font-weight:bold;color:#337ab7">Compare</div>
<div class="t" style="left:784px;top:337.61px;font-size:11.8px;line-height:16px;color:#3a3a3a">Non-</div><div class="t" style="left:784px;top:353.21px;font-size:11.8px;line-height:16px;color:#3a3a3a">government</div>
<div class="t" style="left:868px;top:337.61px;font-size:11.8px;line-height:16px;color:#3a3a3a">96</div>
<div class="t" style="left:11px;top:383.96px;font-size:11.8px;line-height:16px;color:#3a5b8a">6</div>
<div class="t" style="left:65px;top:384.07px;font-size:11.5px;line-height:16px;font-weight:bold;color:#337ab7">Mount Tyson State</div><div class="t" style="left:65px;top:399.67px;font-size:11.5px;line-height:16px;font-weight:bold;color:#337ab7">School</div>
<div class="t" style="left:224px;top:384.07px;font-size:11.5px;line-height:16px;font-weight:bold;color:#337ab7">Mount Tyson</div>
<div class="t" style="left:320px;top:384.07px;font-size:11.5px;line-height:16px;font-weight:bold;color:#337ab7">100</div>
<div class="t" style="left:381px;top:383.96px;font-size:11.8px;line-height:16px;color:#3a5b8a">1%</div>
<svg class="bk" style="left:458.0px;top:385.45px" width="13" height="15" viewBox="0 0 13 15"><path d="M1.6 1.9 L8.9 0.5 L11.6 10.6 L3.9 13.0 Z" fill="url(#gb)"/><path d="M0.0 2.5 L1.9 2.1 L4.3 13.3 L2.3 13.6 Z" fill="#222"/></svg>
<svg class="bk" style="left:471.7px;top:385.45px" width="13" height="15" viewBox="0 0 13 15"><path d="M1.6 1.9 L8.9 0.5 L11.6 10.6 L3.9 13.0 Z" fill="url(#gb)"/><path d="M0.0 2.5 L1.9 2.1 L4.3 13.3 L2.3 13.6 Z" fill="#222"/></svg>
<svg class="bk" style="left:485.4px;top:385.45px" width="13" height="15" viewBox="0 0 13 15"><path d="M1.6 1.9 L8.9 0.5 L11.6 10.6 L3.9 13.0 Z" fill="url(#gb)"/><path d="M0.0 2.5 L1.9 2.1 L4.3 13.3 L2.3 13.6 Z" fill="#222"/></svg>
<svg class="bk" style="left:499.1px;top:385.45px" width="13" height="15" viewBox="0 0 13 15"><path d="M1.6 1.9 L8.9 0.5 L11.6 10.6 L3.9 13.0 Z" fill="url(#gb)"/><path d="M0.0 2.5 L1.9 2.1 L4.3 13.3 L2.3 13.6 Z" fill="#222"/></svg>
<svg class="bk" style="left:512.8px;top:385.45px" width="13" height="15" viewBox="0 0 13 15"><path d="M1.6 1.9 L8.9 0.5 L11.6 10.6 L3.9 13.0 Z" fill="url(#gb)"/><path d="M0.0 2.5 L1.9 2.1 L4.3 13.3 L2.3 13.6 Z" fill="#222"/></svg>
<svg class="md" style="left:546.2px;top:385.45px" width="10" height="15" viewBox="0 0 10 15"><rect x="0.2" y="0.5" width="8.6" height="5.2" rx="0.7" fill="#5aaf1e"/><rect x="1.0" y="0.9" width="1.6" height="4.4" fill="#8fd43c"/><rect x="6.4" y="0.9" width="1.6" height="4.4" fill="#8fd43c"/><rect x="3.2" y="0.9" width="2.6" height="4.4" fill="#3f9612"/><circle cx="4.6" cy="8.7" r="4.35" fill="#ebb05e"/><circle cx="4.6" cy="8.7" r="3.45" fill="#f9dc72"/><circle cx="4.6" cy="8.3" r="2.1" fill="#fce796"/></svg>
<svg class="md" style="left:559.98px;top:385.45px" width="10" height="15" viewBox="0 0 10 15"><rect x="0.2" y="0.5" width="8.6" height="5.2" rx="0.7" fill="#5aaf1e"/><rect x="1.0" y="0.9" width="1.6" height="4.4" fill="#8fd43c"/><rect x="6.4" y="0.9" width="1.6" height="4.4" fill="#8fd43c"/><rect x="3.2" y="0.9" width="2.6" height="4.4" fill="#3f9612"/><circle cx="4.6" cy="8.7" r="4.35" fill="#ebb05e"/><circle cx="4.6" cy="8.7" r="3.45" fill="#f9dc72"/><circle cx="4.6" cy="8.3" r="2.1" fill="#fce796"/></svg>
<svg class="md" style="left:573.76px;top:385.45px" width="10" height="15" viewBox="0 0 10 15"><rect x="0.2" y="0.5" width="8.6" height="5.2" rx="0.7" fill="#5aaf1e"/><rect x="1.0" y="0.9" width="1.6" height="4.4" fill="#8fd43c"/><rect x="6.4" y="0.9" width="1.6" height="4.4" fill="#8fd43c"/><rect x="3.2" y="0.9" width="2.6" height="4.4" fill="#3f9612"/><circle cx="4.6" cy="8.7" r="4.35" fill="#ebb05e"/><circle cx="4.6" cy="8.7" r="3.45" fill="#f9dc72"/><circle cx="4.6" cy="8.3" r="2.1" fill="#fce796"/></svg>
<svg class="md" style="left:587.5400000000001px;top:385.45px" width="10" height="15" viewBox="0 0 10 15"><rect x="0.2" y="0.5" width="8.6" height="5.2" rx="0.7" fill="#5aaf1e"/><rect x="1.0" y="0.9" width="1.6" height="4.4" fill="#8fd43c"/><rect x="6.4" y="0.9" width="1.6" height="4.4" fill="#8fd43c"/><rect x="3.2" y="0.9" width="2.6" height="4.4" fill="#3f9612"/><circle cx="4.6" cy="8.7" r="4.35" fill="#ebb05e"/><circle cx="4.6" cy="8.7" r="3.45" fill="#f9dc72"/><circle cx="4.6" cy="8.3" r="2.1" fill="#fce796"/></svg>
<svg class="md" style="left:601.32px;top:385.45px" width="10" height="15" viewBox="0 0 10 15"><rect x="0.2" y="0.5" width="8.6" height="5.2" rx="0.7" fill="#5aaf1e"/><rect x="1.0" y="0.9" width="1.6" height="4.4" fill="#8fd43c"/><rect x="6.4" y="0.9" width="1.6" height="4.4" fill="#8fd43c"/><rect x="3.2" y="0.9" width="2.6" height="4.4" fill="#3f9612"/><circle cx="4.6" cy="8.7" r="4.35" fill="#ebb05e"/><circle cx="4.6" cy="8.7" r="3.45" fill="#f9dc72"/><circle cx="4.6" cy="8.3" r="2.1" fill="#fce796"/></svg>
<div class="t" style="left:630.5px;top:383.96px;font-size:11.8px;line-height:16px;color:#3a5b8a">50</div>
<div class="t" style="left:714px;top:384.07px;font-size:11.5px;line-height:16px;font-weight:bold;color:#337ab7">Trend /</div><div class="t" style="left:714px;top:399.67px;font-size:11.5px;line-height:16px;font-weight:bold;color:#337ab7">Compare</div>
<div class="t" style="left:784px;top:383.96px;font-size:11.8px;line-height:16px;color:#3a5b8a">Government</div>
<div class="t" style="left:868px;top:383.96px;font-size:11.8px;line-height:16px;color:#3a5b8a">25</div>
<div class="t" style="left:11px;top:430.31px;font-size:11.8px;line-height:16px;color:#3a3a3a">7</div>
<div class="t" style="left:65px;top:430.42px;font-size:11.5px;line-height:16px;font-weight:bold;color:#337ab7;letter-spacing:-0.2px">Brisbane Boys' College</div>
<div class="t" style="left:224px;top:430.42px;font-size:11.5px;line-height:16px;font-weight:bold;color:#337ab7">Toowong</div>
<div class="t" style="left:320px;top:430.42px;font-size:11.5px;line-height:16px;font-weight:bold;color:#337ab7">100</div>
<div class="t" style="left:381px;top:430.31px;font-size:11.8px;line-height:16px;color:#3a3a3a">1%</div>
<svg class="bk" style="left:458.0px;top:431.8px" width="13" height="15" viewBox="0 0 13 15"><path d="M1.6 1.9 L8.9 0.5 L11.6 10.6 L3.9 13.0 Z" fill="url(#gb)"/><path d="M0.0 2.5 L1.9 2.1 L4.3 13.3 L2.3 13.6 Z" fill="#222"/></svg>
<svg class="bk" style="left:471.7px;top:431.8px" width="13" height="15" viewBox="0 0 13 15"><path d="M1.6 1.9 L8.9 0.5 L11.6 10.6 L3.9 13.0 Z" fill="url(#gb)"/><path d="M0.0 2.5 L1.9 2.1 L4.3 13.3 L2.3 13.6 Z" fill="#222"/></svg>
<svg class="bk" style="left:485.4px;top:431.8px" width="13" height="15" viewBox="0 0 13 15"><path d="M1.6 1.9 L8.9 0.5 L11.6 10.6 L3.9 13.0 Z" fill="url(#gb)"/><path d="M0.0 2.5 L1.9 2.1 L4.3 13.3 L2.3 13.6 Z" fill="#222"/></svg>
<svg class="bk" style="left:499.1px;top:431.8px" width="13" height="15" viewBox="0 0 13 15"><path d="M1.6 1.9 L8.9 0.5 L11.6 10.6 L3.9 13.0 Z" fill="url(#gb)"/><path d="M0.0 2.5 L1.9 2.1 L4.3 13.3 L2.3 13.6 Z" fill="#222"/></svg>
<svg class="bk" style="left:512.8px;top:431.8px" width="13" height="15" viewBox="0 0 13 15"><path d="M1.6 1.9 L8.9 0.5 L11.6 10.6 L3.9 13.0 Z" fill="url(#gb)"/><path d="M0.0 2.5 L1.9 2.1 L4.3 13.3 L2.3 13.6 Z" fill="#222"/></svg>
<svg class="md" style="left:546.2px;top:431.8px" width="10" height="15" viewBox="0 0 10 15"><rect x="0.2" y="0.5" width="8.6" height="5.2" rx="0.7" fill="#5aaf1e"/><rect x="1.0" y="0.9" width="1.6" height="4.4" fill="#8fd43c"/><rect x="6.4" y="0.9" width="1.6" height="4.4" fill="#8fd43c"/><rect x="3.2" y="0.9" width="2.6" height="4.4" fill="#3f9612"/><circle cx="4.6" cy="8.7" r="4.35" fill="#ebb05e"/><circle cx="4.6" cy="8.7" r="3.45" fill="#f9dc72"/><circle cx="4.6" cy="8.3" r="2.1" fill="#fce796"/></svg>
<svg class="md" style="left:559.98px;top:431.8px" width="10" height="15" viewBox="0 0 10 15"><rect x="0.2" y="0.5" width="8.6" height="5.2" rx="0.7" fill="#5aaf1e"/><rect x="1.0" y="0.9" width="1.6" height="4.4" fill="#8fd43c"/><rect x="6.4" y="0.9" width="1.6" height="4.4" fill="#8fd43c"/><rect x="3.2" y="0.9" width="2.6" height="4.4" fill="#3f9612"/><circle cx="4.6" cy="8.7" r="4.35" fill="#ebb05e"/><circle cx="4.6" cy="8.7" r="3.45" fill="#f9dc72"/><circle cx="4.6" cy="8.3" r="2.1" fill="#fce796"/></svg>
<svg class="md" style="left:573.76px;top:431.8px" width="10" height="15" viewBox="0 0 10 15"><rect x="0.2" y="0.5" width="8.6" height="5.2" rx="0.7" fill="#5aaf1e"/><rect x="1.0" y="0.9" width="1.6" height="4.4" fill="#8fd43c"/><rect x="6.4" y="0.9" width="1.6" height="4.4" fill="#8fd43c"/><rect x="3.2" y="0.9" width="2.6" height="4.4" fill="#3f9612"/><circle cx="4.6" cy="8.7" r="4.35" fill="#ebb05e"/><circle cx="4.6" cy="8.7" r="3.45" fill="#f9dc72"/><circle cx="4.6" cy="8.3" r="2.1" fill="#fce796"/></svg>
<svg class="md" style="left:587.5400000000001px;top:431.8px" width="10" height="15" viewBox="0 0 10 15"><rect x="0.2" y="0.5" width="8.6" height="5.2" rx="0.7" fill="#5aaf1e"/><rect x="1.0" y="0.9" width="1.6" height="4.4" fill="#8fd43c"/><rect x="6.4" y="0.9" width="1.6" height="4.4" fill="#8fd43c"/><rect x="3.2" y="0.9" width="2.6" height="4.4" fill="#3f9612"/><circle cx="4.6" cy="8.7" r="4.35" fill="#ebb05e"/><circle cx="4.6" cy="8.7" r="3.45" fill="#f9dc72"/><circle cx="4.6" cy="8.3" r="2.1" fill="#fce796"/></svg>
<svg class="md" style="left:601.32px;top:431.8px" width="10" height="15" viewBox="0 0 10 15"><rect x="0.2" y="0.5" width="8.6" height="5.2" rx="0.7" fill="#5aaf1e"/><rect x="1.0" y="0.9" width="1.6" height="4.4" fill="#8fd43c"/><rect x="6.4" y="0.9" width="1.6" height="4.4" fill="#8fd43c"/><rect x="3.2" y="0.9" width="2.6" height="4.4" fill="#3f9612"/><circle cx="4.6" cy="8.7" r="4.35" fill="#ebb05e"/><circle cx="4.6" cy="8.7" r="3.45" fill="#f9dc72"/><circle cx="4.6" cy="8.3" r="2.1" fill="#fce796"/></svg>
<div class="t" style="left:630.5px;top:430.31px;font-size:11.8px;line-height:16px;color:#3a3a3a">1420</div>
<div class="t" style="left:714px;top:430.42px;font-size:11.5px;line-height:16px;font-weight:bold;color:#337ab7">Trend /</div><div class="t" style="left:714px;top:446.02px;font-size:11.5px;line-height:16px;font-weight:bold;color:#337ab7">Compare</div>
<div class="t" style="left:784px;top:430.31px;font-size:11.8px;line-height:16px;color:#3a3a3a">Non-</div><div class="t" style="left:784px;top:445.91px;font-size:11.8px;line-height:16px;color:#3a3a3a">government</div>
<div class="t" style="left:868px;top:430.31px;font-size:11.8px;line-height:16px;color:#3a3a3a">96</div>
<div class="t" style="left:11px;top:476.66px;font-size:11.8px;line-height:16px;color:#3a5b8a">8</div>
<div class="t" style="left:65px;top:476.77px;font-size:11.5px;line-height:16px;font-weight:bold;color:#337ab7">The Southport School</div>
<div class="t" style="left:224px;top:476.77px;font-size:11.5px;line-height:16px;font-weight:bold;color:#337ab7">Southport</div>
<div class="t" style="left:320px;top:476.77px;font-size:11.5px;line-height:16px;font-weight:bold;color:#337ab7">100</div>
<div class="t" style="left:381px;top:476.66px;font-size:11.8px;line-height:16px;color:#3a5b8a">1%</div>
<svg class="bk" style="left:458.0px;top:478.15px" width="13" height="15" viewBox="0 0 13 15"><path d="M1.6 1.9 L8.9 0.5 L11.6 10.6 L3.9 13.0 Z" fill="url(#gb)"/><path d="M0.0 2.5 L1.9 2.1 L4.3 13.3 L2.3 13.6 Z" fill="#222"/></svg>
<svg class="bk" style="left:471.7px;top:478.15px" width="13" height="15" viewBox="0 0 13 15"><path d="M1.6 1.9 L8.9 0.5 L11.6 10.6 L3.9 13.0 Z" fill="url(#gb)"/><path d="M0.0 2.5 L1.9 2.1 L4.3 13.3 L2.3 13.6 Z" fill="#222"/></svg>
<svg class="bk" style="left:485.4px;top:478.15px" width="13" height="15" viewBox="0 0 13 15"><path d="M1.6 1.9 L8.9 0.5 L11.6 10.6 L3.9 13.0 Z" fill="url(#gb)"/><path d="M0.0 2.5 L1.9 2.1 L4.3 13.3 L2.3 13.6 Z" fill="#222"/></svg>
<svg class="bk" style="left:499.1px;top:478.15px" width="13" height="15" viewBox="0 0 13 15"><path d="M1.6 1.9 L8.9 0.5 L11.6 10.6 L3.9 13.0 Z" fill="url(#gb)"/><path d="M0.0 2.5 L1.9 2.1 L4.3 13.3 L2.3 13.6 Z" fill="#222"/></svg>
<svg class="bk" style="left:512.8px;top:478.15px" width="13" height="15" viewBox="0 0 13 15"><path d="M1.6 1.9 L8.9 0.5 L11.6 10.6 L3.9 13.0 Z" fill="url(#gb)"/><path d="M0.0 2.5 L1.9 2.1 L4.3 13.3 L2.3 13.6 Z" fill="#222"/></svg>
<svg class="md" style="left:546.2px;top:478.15px" width="10" height="15" viewBox="0 0 10 15"><rect x="0.2" y="0.5" width="8.6" height="5.2" rx="0.7" fill="#5aaf1e"/><rect x="1.0" y="0.9" width="1.6" height="4.4" fill="#8fd43c"/><rect x="6.4" y="0.9" width="1.6" height="4.4" fill="#8fd43c"/><rect x="3.2" y="0.9" width="2.6" height="4.4" fill="#3f9612"/><circle cx="4.6" cy="8.7" r="4.35" fill="#ebb05e"/><circle cx="4.6" cy="8.7" r="3.45" fill="#f9dc72"/><circle cx="4.6" cy="8.3" r="2.1" fill="#fce796"/></svg>
<svg class="md" style="left:559.98px;top:478.15px" width="10" height="15" viewBox="0 0 10 15"><rect x="0.2" y="0.5" width="8.6" height="5.2" rx="0.7" fill="#5aaf1e"/><rect x="1.0" y="0.9" width="1.6" height="4.4" fill="#8fd43c"/><rect x="6.4" y="0.9" width="1.6" height="4.4" fill="#8fd43c"/><rect x="3.2" y="0.9" width="2.6" height="4.4" fill="#3f9612"/><circle cx="4.6" cy="8.7" r="4.35" fill="#ebb05e"/><circle cx="4.6" cy="8.7" r="3.45" fill="#f9dc72"/><circle cx="4.6" cy="8.3" r="2.1" fill="#fce796"/></svg>
<svg class="md" style="left:573.76px;top:478.15px" width="10" height="15" viewBox="0 0 10 15"><rect x="0.2" y="0.5" width="8.6" height="5.2" rx="0.7" fill="#5aaf1e"/><rect x="1.0" y="0.9" width="1.6" height="4.4" fill="#8fd43c"/><rect x="6.4" y="0.9" width="1.6" height="4.4" fill="#8fd43c"/><rect x="3.2" y="0.9" width="2.6" height="4.4" fill="#3f9612"/><circle cx="4.6" cy="8.7" r="4.35" fill="#ebb05e"/><circle cx="4.6" cy="8.7" r="3.45" fill="#f9dc72"/><circle cx="4.6" cy="8.3" r="2.1" fill="#fce796"/></svg>
<svg class="md" style="left:587.5400000000001px;top:478.15px" width="10" height="15" viewBox="0 0 10 15"><rect x="0.2" y="0.5" width="8.6" height="5.2" rx="0.7" fill="#5aaf1e"/><rect x="1.0" y="0.9" width="1.6" height="4.4" fill="#8fd43c"/><rect x="6.4" y="0.9" width="1.6" height="4.4" fill="#8fd43c"/><rect x="3.2" y="0.9" width="2.6" height="4.4" fill="#3f9612"/><circle cx="4.6" cy="8.7" r="4.35" fill="#ebb05e"/><circle cx="4.6" cy="8.7" r="3.45" fill="#f9dc72"/><circle cx="4.6" cy="8.3" r="2.1" fill="#fce796"/></svg>
<svg class="md" style="left:601.32px;top:478.15px" width="10" height="15" viewBox="0 0 10 15"><rect x="0.2" y="0.5" width="8.6" height="5.2" rx="0.7" fill="#5aaf1e"/><rect x="1.0" y="0.9" width="1.6" height="4.4" fill="#8fd43c"/><rect x="6.4" y="0.9" width="1.6" height="4.4" fill="#8fd43c"/><rect x="3.2" y="0.9" width="2.6" height="4.4" fill="#3f9612"/><circle cx="4.6" cy="8.7" r="4.35" fill="#ebb05e"/><circle cx="4.6" cy="8.7" r="3.45" fill="#f9dc72"/><circle cx="4.6" cy="8.3" r="2.1" fill="#fce796"/></svg>
<div class="t" style="left:630.5px;top:476.66px;font-size:11.8px;line-height:16px;color:#3a5b8a">1620</div>
<div class="t" style="left:714px;top:476.77px;font-size:11.5px;line-height:16px;font-weight:bold;color:#337ab7">Trend /</div><div class="t" style="left:714px;top:492.37px;font-size:11.5px;line-height:16px;font-weight:bold;color:#337ab7">Compare</div>
<div class="t" style="left:784px;top:476.66px;font-size:11.8px;line-height:16px;color:#3a5b8a">Non-</div><div class="t" style="left:784px;top:492.26px;font-size:11.8px;line-height:16px;color:#3a5b8a">government</div>
<div class="t" style="left:868px;top:476.66px;font-size:11.8px;line-height:16px;color:#3a5b8a">95</div>
<div class="t" style="left:11px;top:523.01px;font-size:11.8px;line-height:16px;color:#3a3a3a">9</div>
<div class="t" style="left:65px;top:523.12px;font-size:11.5px;line-height:16px;font-weight:bold;color:#337ab7">Ormiston College</div>
<div class="t" style="left:224px;top:523.12px;font-size:11.5px;line-height:16px;font-weight:bold;color:#337ab7">Ormiston</div>
<div class="t" style="left:320px;top:523.12px;font-size:11.5px;line-height:16px;font-weight:bold;color:#337ab7">100</div>
<div class="t" style="left:381px;top:523.01px;font-size:11.8px;line-height:16px;color:#3a3a3a">1%</div>
<svg class="bk" style="left:458.0px;top:524.5px" width="13" height="15" viewBox="0 0 13 15"><path d="M1.6 1.9 L8.9 0.5 L11.6 10.6 L3.9 13.0 Z" fill="url(#gb)"/><path d="M0.0 2.5 L1.9 2.1 L4.3 13.3 L2.3 13.6 Z" fill="#222"/></svg>
<svg class="bk" style="left:471.7px;top:524.5px" width="13" height="15" viewBox="0 0 13 15"><path d="M1.6 1.9 L8.9 0.5 L11.6 10.6 L3.9 13.0 Z" fill="url(#gb)"/><path d="M0.0 2.5 L1.9 2.1 L4.3 13.3 L2.3 13.6 Z" fill="#222"/></svg>
<svg class="bk" style="left:485.4px;top:524.5px" width="13" height="15" viewBox="0 0 13 15"><path d="M1.6 1.9 L8.9 0.5 L11.6 10.6 L3.9 13.0 Z" fill="url(#gb)"/><path d="M0.0 2.5 L1.9 2.1 L4.3 13.3 L2.3 13.6 Z" fill="#222"/></svg>
<svg class="bk" style="left:499.1px;top:524.5px" width="13" height="15" viewBox="0 0 13 15"><path d="M1.6 1.9 L8.9 0.5 L11.6 10.6 L3.9 13.0 Z" fill="url(#gb)"/><path d="M0.0 2.5 L1.9 2.1 L4.3 13.3 L2.3 13.6 Z" fill="#222"/></svg>
<svg class="bk" style="left:512.8px;top:524.5px" width="13" height="15" viewBox="0 0 13 15"><path d="M1.6 1.9 L8.9 0.5 L11.6 10.6 L3.9 13.0 Z" fill="url(#gb)"/><path d="M0.0 2.5 L1.9 2.1 L4.3 13.3 L2.3 13.6 Z" fill="#222"/></svg>
<svg class="md" style="left:546.2px;top:524.5px" width="10" height="15" viewBox="0 0 10 15"><rect x="0.2" y="0.5" width="8.6" height="5.2" rx="0.7" fill="#5aaf1e"/><rect x="1.0" y="0.9" width="1.6" height="4.4" fill="#8fd43c"/><rect x="6.4" y="0.9" width="1.6" height="4.4" fill="#8fd43c"/><rect x="3.2" y="0.9" width="2.6" height="4.4" fill="#3f9612"/><circle cx="4.6" cy="8.7" r="4.35" fill="#ebb05e"/><circle cx="4.6" cy="8.7" r="3.45" fill="#f9dc72"/><circle cx="4.6" cy="8.3" r="2.1" fill="#fce796"/></svg>
<svg class="md" style="left:559.98px;top:524.5px" width="10" height="15" viewBox="0 0 10 15"><rect x="0.2" y="0.5" width="8.6" height="5.2" rx="0.7" fill="#5aaf1e"/><rect x="1.0" y="0.9" width="1.6" height="4.4" fill="#8fd43c"/><rect x="6.4" y="0.9" width="1.6" height="4.4" fill="#8fd43c"/><rect x="3.2" y="0.9" width="2.6" height="4.4" fill="#3f9612"/><circle cx="4.6" cy="8.7" r="4.35" fill="#ebb05e"/><circle cx="4.6" cy="8.7" r="3.45" fill="#f9dc72"/><circle cx="4.6" cy="8.3" r="2.1" fill="#fce796"/></svg>
<svg class="md" style="left:573.76px;top:524.5px" width="10" height="15" viewBox="0 0 10 15"><rect x="0.2" y="0.5" width="8.6" height="5.2" rx="0.7" fill="#5aaf1e"/><rect x="1.0" y="0.9" width="1.6" height="4.4" fill="#8fd43c"/><rect x="6.4" y="0.9" width="1.6" height="4.4" fill="#8fd43c"/><rect x="3.2" y="0.9" width="2.6" height="4.4" fill="#3f9612"/><circle cx="4.6" cy="8.7" r="4.35" fill="#ebb05e"/><circle cx="4.6" cy="8.7" r="3.45" fill="#f9dc72"/><circle cx="4.6" cy="8.3" r="2.1" fill="#fce796"/></svg>
<svg class="md" style="left:587.5400000000001px;top:524.5px" width="10" height="15" viewBox="0 0 10 15"><rect x="0.2" y="0.5" width="8.6" height="5.2" rx="0.7" fill="#5aaf1e"/><rect x="1.0" y="0.9" width="1.6" height="4.4" fill="#8fd43c"/><rect x="6.4" y="0.9" width="1.6" height="4.4" fill="#8fd43c"/><rect x="3.2" y="0.9" width="2.6" height="4.4" fill="#3f9612"/><circle cx="4.6" cy="8.7" r="4.35" fill="#ebb05e"/><circle cx="4.6" cy="8.7" r="3.45" fill="#f9dc72"/><circle cx="4.6" cy="8.3" r="2.1" fill="#fce796"/></svg>
<svg class="md" style="left:601.32px;top:524.5px" width="10" height="15" viewBox="0 0 10 15"><rect x="0.2" y="0.5" width="8.6" height="5.2" rx="0.7" fill="#5aaf1e"/><rect x="1.0" y="0.9" width="1.6" height="4.4" fill="#8fd43c"/><rect x="6.4" y="0.9" width="1.6" height="4.4" fill="#8fd43c"/><rect x="3.2" y="0.9" width="2.6" height="4.4" fill="#3f9612"/><circle cx="4.6" cy="8.7" r="4.35" fill="#ebb05e"/><circle cx="4.6" cy="8.7" r="3.45" fill="#f9dc72"/><circle cx="4.6" cy="8.3" r="2.1" fill="#fce796"/></svg>
<div class="t" style="left:630.5px;top:523.01px;font-size:11.8px;line-height:16px;color:#3a3a3a">1490</div>
<div class="t" style="left:714px;top:523.12px;font-size:11.5px;line-height:16px;font-weight:bold;color:#337ab7">Trend /</div><div class="t" style="left:714px;top:538.72px;font-size:11.5px;line-height:16px;font-weight:bold;color:#337ab7">Compare</div>
<div class="t" style="left:784px;top:523.01px;font-size:11.8px;line-height:16px;color:#3a3a3a">Non-</div><div class="t" style="left:784px;top:538.61px;font-size:11.8px;line-height:16px;color:#3a3a3a">government</div>
<div class="t" style="left:868px;top:523.01px;font-size:11.8px;line-height:16px;color:#3a3a3a">95</div>
<div class="t" style="left:11px;top:569.36px;font-size:11.8px;line-height:16px;color:#3a5b8a">10</div>
<div class="t" style="left:65px;top:569.47px;font-size:11.5px;line-height:16px;font-weight:bold;color:#337ab7">Somerville House</div>
<div class="t" style="left:224px;top:569.47px;font-size:11.5px;line-height:16px;font-weight:bold;color:#337ab7">South</div><div class="t" style="left:224px;top:585.07px;font-size:11.5px;line-height:16px;font-weight:bold;color:#337ab7">Brisbane</div>
<div class="t" style="left:320px;top:569.47px;font-size:11.5px;line-height:16px;font-weight:bold;color:#337ab7">100</div>
<div class="t" style="left:381px;top:569.36px;font-size:11.8px;line-height:16px;color:#3a5b8a">1%</div>
<svg class="bk" style="left:458.0px;top:570.85px" width="13" height="15" viewBox="0 0 13 15"><path d="M1.6 1.9 L8.9 0.5 L11.6 10.6 L3.9 13.0 Z" fill="url(#gb)"/><path d="M0.0 2.5 L1.9 2.1 L4.3 13.3 L2.3 13.6 Z" fill="#222"/></svg>
<svg class="bk" style="left:471.7px;top:570.85px" width="13" height="15" viewBox="0 0 13 15"><path d="M1.6 1.9 L8.9 0.5 L11.6 10.6 L3.9 13.0 Z" fill="url(#gb)"/><path d="M0.0 2.5 L1.9 2.1 L4.3 13.3 L2.3 13.6 Z" fill="#222"/></svg>
<svg class="bk" style="left:485.4px;top:570.85px" width="13" height="15" viewBox="0 0 13 15"><path d="M1.6 1.9 L8.9 0.5 L11.6 10.6 L3.9 13.0 Z" fill="url(#gb)"/><path d="M0.0 2.5 L1.9 2.1 L4.3 13.3 L2.3 13.6 Z" fill="#222"/></svg>
<svg class="bk" style="left:499.1px;top:570.85px" width="13" height="15" viewBox="0 0 13 15"><path d="M1.6 1.9 L8.9 0.5 L11.6 10.6 L3.9 13.0 Z" fill="url(#gb)"/><path d="M0.0 2.5 L1.9 2.1 L4.3 13.3 L2.3 13.6 Z" fill="#222"/></svg>
<svg class="bk" style="left:512.8px;top:570.85px" width="13" height="15" viewBox="0 0 13 15"><path d="M1.6 1.9 L8.9 0.5 L11.6 10.6 L3.9 13.0 Z" fill="url(#gb)"/><path d="M0.0 2.5 L1.9 2.1 L4.3 13.3 L2.3 13.6 Z" fill="#222"/></svg>
<svg class="md" style="left:546.2px;top:570.85px" width="10" height="15" viewBox="0 0 10 15"><rect x="0.2" y="0.5" width="8.6" height="5.2" rx="0.7" fill="#5aaf1e"/><rect x="1.0" y="0.9" width="1.6" height="4.4" fill="#8fd43c"/><rect x="6.4" y="0.9" width="1.6" height="4.4" fill="#8fd43c"/><rect x="3.2" y="0.9" width="2.6" height="4.4" fill="#3f9612"/><circle cx="4.6" cy="8.7" r="4.35" fill="#ebb05e"/><circle cx="4.6" cy="8.7" r="3.45" fill="#f9dc72"/><circle cx="4.6" cy="8.3" r="2.1" fill="#fce796"/></svg>
<svg class="md" style="left:559.98px;top:570.85px" width="10" height="15" viewBox="0 0 10 15"><rect x="0.2" y="0.5" width="8.6" height="5.2" rx="0.7" fill="#5aaf1e"/><rect x="1.0" y="0.9" width="1.6" height="4.4" fill="#8fd43c"/><rect x="6.4" y="0.9" width="1.6" height="4.4" fill="#8fd43c"/><rect x="3.2" y="0.9" width="2.6" height="4.4" fill="#3f9612"/><circle cx="4.6" cy="8.7" r="4.35" fill="#ebb05e"/><circle cx="4.6" cy="8.7" r="3.45" fill="#f9dc72"/><circle cx="4.6" cy="8.3" r="2.1" fill="#fce796"/></svg>
<svg class="md" style="left:573.76px;top:570.85px" width="10" height="15" viewBox="0 0 10 15"><rect x="0.2" y="0.5" width="8.6" height="5.2" rx="0.7" fill="#5aaf1e"/><rect x="1.0" y="0.9" width="1.6" height="4.4" fill="#8fd43c"/><rect x="6.4" y="0.9" width="1.6" height="4.4" fill="#8fd43c"/><rect x="3.2" y="0.9" width="2.6" height="4.4" fill="#3f9612"/><circle cx="4.6" cy="8.7" r="4.35" fill="#ebb05e"/><circle cx="4.6" cy="8.7" r="3.45" fill="#f9dc72"/><circle cx="4.6" cy="8.3" r="2.1" fill="#fce796"/></svg>
<svg class="md" style="left:587.5400000000001px;top:570.85px" width="10" height="15" viewBox="0 0 10 15"><rect x="0.2" y="0.5" width="8.6" height="5.2" rx="0.7" fill="#5aaf1e"/><rect x="1.0" y="0.9" width="1.6" height="4.4" fill="#8fd43c"/><rect x="6.4" y="0.9" width="1.6" height="4.4" fill="#8fd43c"/><rect x="3.2" y="0.9" width="2.6" height="4.4" fill="#3f9612"/><circle cx="4.6" cy="8.7" r="4.35" fill="#ebb05e"/><circle cx="4.6" cy="8.7" r="3.45" fill="#f9dc72"/><circle cx="4.6" cy="8.3" r="2.1" fill="#fce796"/></svg>
<svg class="md" style="left:601.32px;top:570.85px" width="10" height="15" viewBox="0 0 10 15"><rect x="0.2" y="0.5" width="8.6" height="5.2" rx="0.7" fill="#5aaf1e"/><rect x="1.0" y="0.9" width="1.6" height="4.4" fill="#8fd43c"/><rect x="6.4" y="0.9" width="1.6" height="4.4" fill="#8fd43c"/><rect x="3.2" y="0.9" width="2.6" height="4.4" fill="#3f9612"/><circle cx="4.6" cy="8.7" r="4.35" fill="#ebb05e"/><circle cx="4.6" cy="8.7" r="3.45" fill="#f9dc72"/><circle cx="4.6" cy="8.3" r="2.1" fill="#fce796"/></svg>
<div class="t" style="left:630.5px;top:569.36px;font-size:11.8px;line-height:16px;color:#3a5b8a">1340</div>
<div class="t" style="left:714px;top:569.47px;font-size:11.5px;line-height:16px;font-weight:bold;color:#337ab7">Trend /</div><div class="t" style="left:714px;top:585.07px;font-size:11.5px;line-height:16px;font-weight:bold;color:#337ab7">Compare</div>
<div class="t" style="left:784px;top:569.36px;font-size:11.8px;line-height:16px;color:#3a5b8a">Non-</div><div class="t" style="left:784px;top:584.96px;font-size:11.8px;line-height:16px;color:#3a5b8a">government</div>
<div class="t" style="left:868px;top:569.36px;font-size:11.8px;line-height:16px;color:#3a5b8a">96</div>
</div></body></html>
